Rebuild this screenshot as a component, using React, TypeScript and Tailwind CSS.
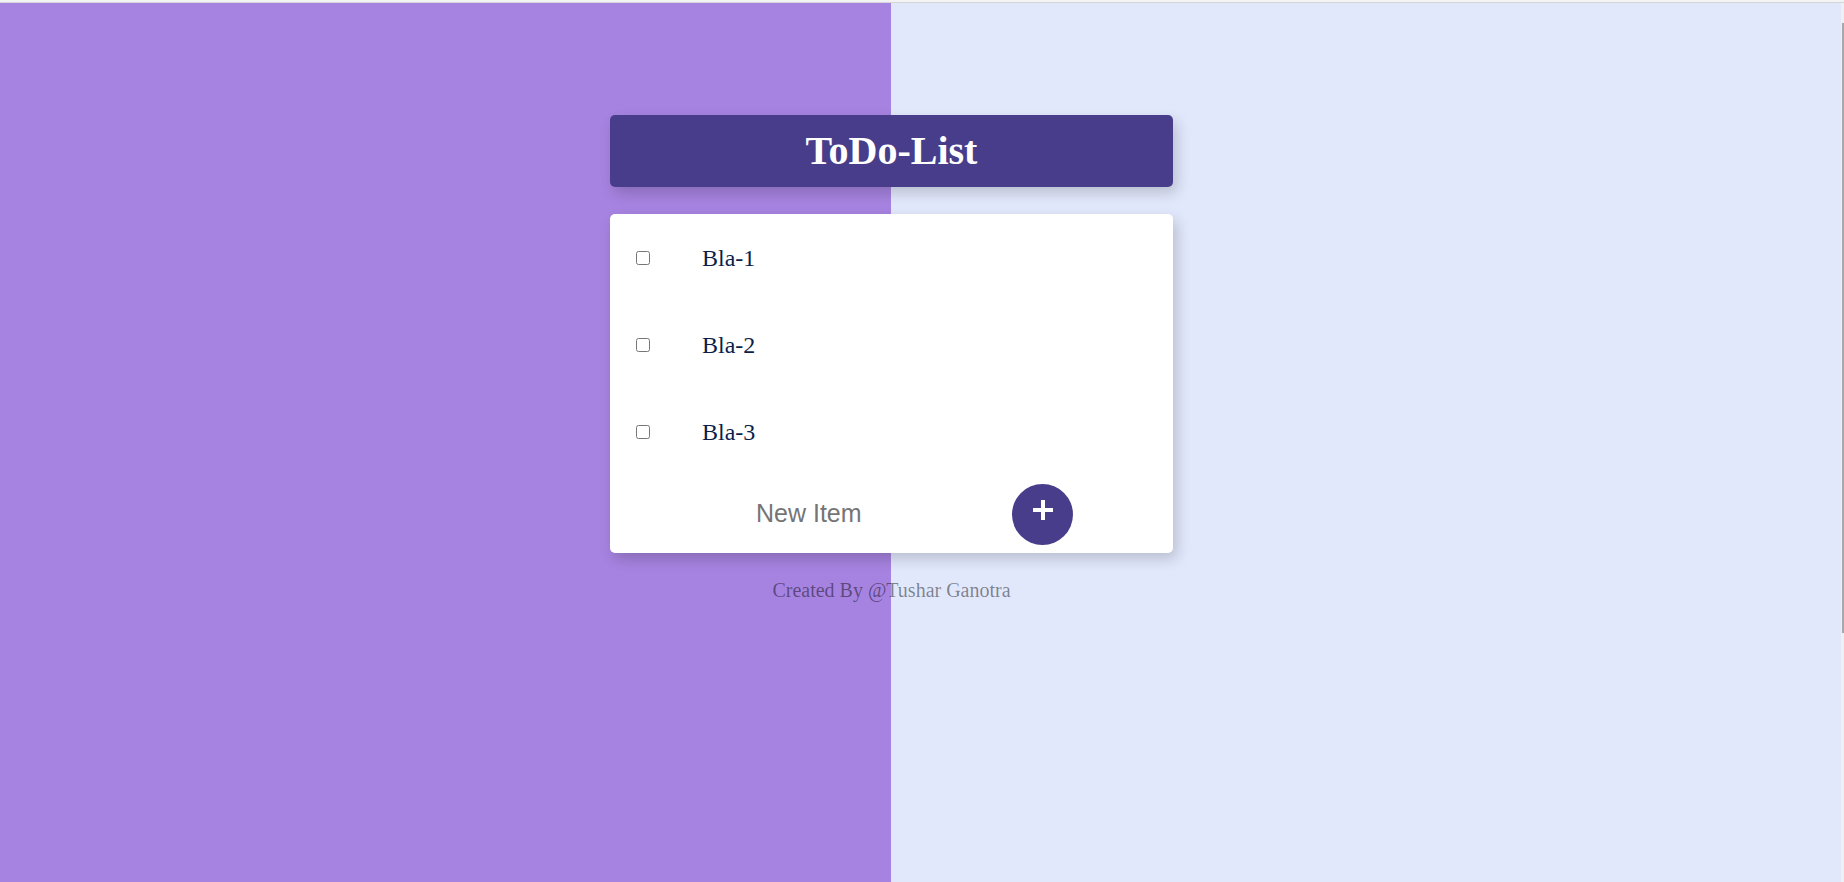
export default function App() {
  const items = ["Bla-1", "Bla-2", "Bla-3"];

  return (
    <div className="flex h-[882px] flex-col overflow-hidden">
      {/* top edge */}
      <div className="h-[3px] bg-[#f3f3f3] border-b border-[#d6d6d6]" />

      <div className="flex flex-1">
        <main className="flex-1 bg-[linear-gradient(90deg,#a683e0_891px,#e2e8fc_891px)]">
          <div className="flex w-[1783px] flex-col items-center pt-[112px]">
            {/* HEADER */}
            <div className="flex h-[72px] w-[563px] items-center justify-center rounded-[5px] bg-[#483d8b] shadow-[4px_6px_14px_rgba(0,0,0,0.18)]">
              <h1 className="font-['Liberation_Serif',serif] text-[40px] font-bold text-white">
                ToDo-List
              </h1>
            </div>

            {/* CARD */}
            <div className="mt-[27px] w-[563px] rounded-[5px] bg-white shadow-[4px_6px_14px_rgba(0,0,0,0.18)]">
              {items.map((item) => (
                <div key={item} className="flex h-[87px] items-center pl-[26px]">
                  <input type="checkbox" className="h-[14px] w-[14px]" />
                  <span className="ml-[52px] font-['Liberation_Serif',serif] text-[24px] text-[#0b1f4a]">
                    {item}
                  </span>
                </div>
              ))}

              {/* FORM */}
              <div className="flex h-[78px] items-center pl-[146px]">
                <input
                  type="text"
                  placeholder="New Item"
                  className="w-[256px] bg-transparent font-['Liberation_Sans',sans-serif] text-[25px] text-[#333] outline-none placeholder:text-[#757575]"
                />
                <button className="flex h-[61px] w-[61px] items-center justify-center rounded-full bg-[#483d8b]">
                  <svg width="20" height="20" viewBox="0 0 20 20" className="mb-[8px]">
                    <rect x="8" y="0" width="4" height="20" fill="white" />
                    <rect x="0" y="8" width="20" height="4" fill="white" />
                  </svg>
                </button>
              </div>
            </div>

            {/* FOOTER */}
            <p className="mt-[22px] font-['Liberation_Serif',serif] text-[20px] text-[rgba(0,0,0,0.45)]">
              Created By @Tushar Ganotra
            </p>
          </div>
        </main>

        {/* scrollbar */}
        <div className="w-[3px] bg-[#f0f0f0] pt-[20px]">
          <div className="ml-auto h-[610px] w-[2px] bg-[#a8a8a8]" />
        </div>
      </div>
    </div>
  );
}
